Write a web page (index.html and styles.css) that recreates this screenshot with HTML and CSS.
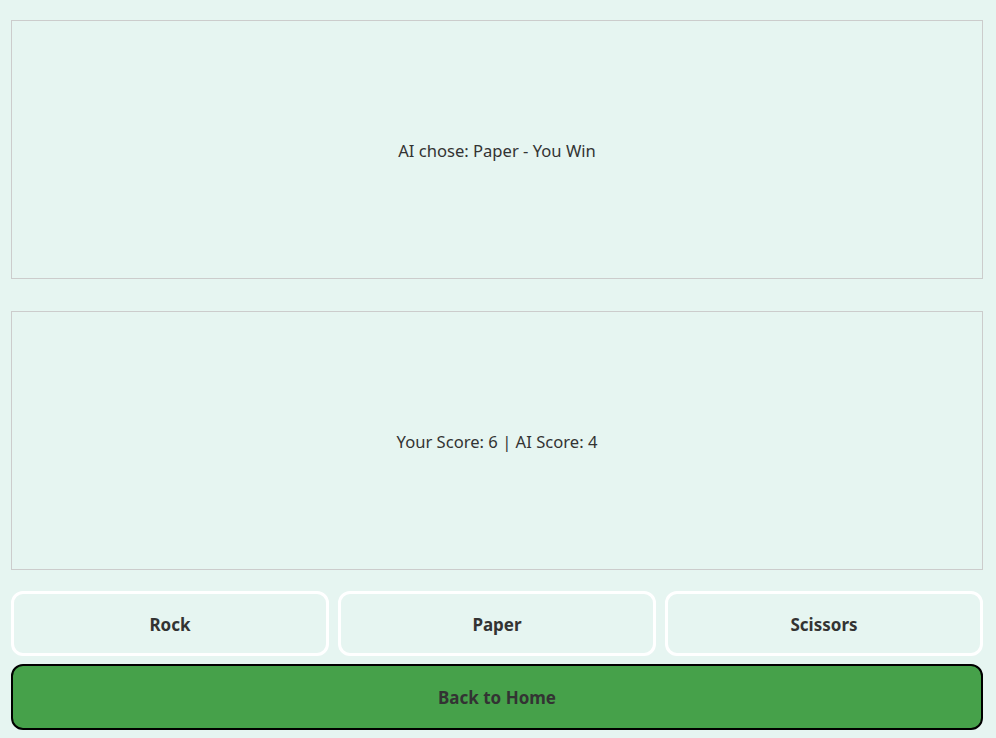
FILE: index.html
```html
<!DOCTYPE html>
<html>
<head>
<meta charset="utf-8">
<link rel="stylesheet" href="styles.css">
</head>
<body>
<div class="app">
  <div class="panel"><p class="msg">AI chose: Paper - You Win</p></div>
  <div class="panel second"><p class="msg">Your Score: 6 | AI Score: 4</p></div>
  <div class="choices">
    <button class="choice">Rock</button>
    <button class="choice">Paper</button>
    <button class="choice">Scissors</button>
  </div>
  <button class="home">Back to Home</button>
</div>
</body>
</html>
```
FILE: styles.css
```css
html, body {
  margin: 0;
  padding: 0;
  background: #e6f5f1;
}
body {
  font-family: "Noto Sans", "Open Sans", sans-serif;
  color: #333;
}
.app {
  width: 972px;
  margin-left: 11px;
  padding-top: 20px;
  display: flex;
  flex-direction: column;
}
.panel {
  height: 257px;
  border: 1px solid #cccccc;
  display: flex;
  align-items: center;
  justify-content: center;
}
.panel.second {
  margin-top: 32px;
}
.msg {
  margin: 2px 0 0;
  font-size: 16.6px;
}
.choices {
  margin-top: 21px;
  display: grid;
  grid-template-columns: repeat(3, 1fr);
  gap: 9px;
}
.choice {
  height: 65px;
  padding-top: 2px;
  background: #e6f5f1;
  border: 3px solid #ffffff;
  border-radius: 12px;
  font-family: inherit;
  font-weight: bold;
  font-size: 17px;
  color: #333;
}
.home {
  margin-top: 8px;
  height: 66px;
  background: #46a14a;
  border: 2px solid #000;
  border-radius: 12px;
  font-family: inherit;
  font-weight: bold;
  font-size: 17px;
  color: #333;
}
```
